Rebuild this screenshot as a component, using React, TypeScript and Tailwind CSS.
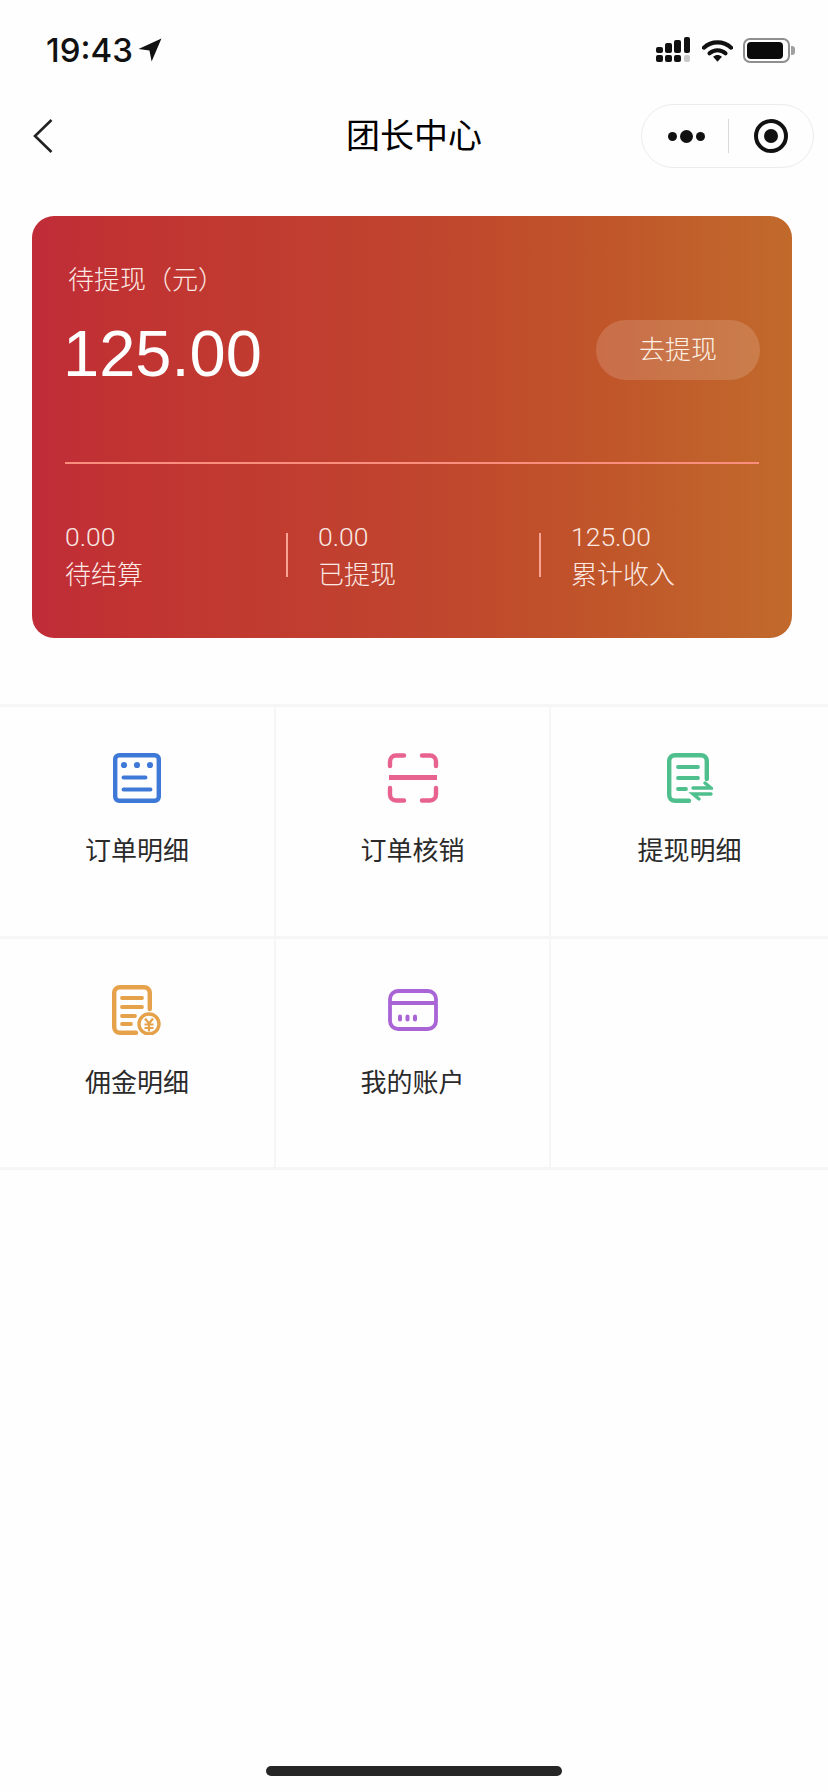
import React from 'react';

const font = { fontFamily: '"Liberation Sans", "Noto Sans CJK SC", sans-serif' };

function StatusIcons() {
  return (
    <div className="flex items-center">
      <svg width="36" height="26" viewBox="0 0 36 26" className="mr-[10px]">
        <g fill="#111">
          <rect x="0" y="10" width="7" height="6" rx="2" />
          <rect x="9" y="6" width="7" height="10" rx="2" />
          <rect x="18" y="3" width="7" height="13" rx="2" />
          <rect x="28" y="0" width="6" height="16" rx="2" />
          <rect x="0" y="18" width="7" height="7" rx="2" />
          <rect x="9" y="18" width="7" height="7" rx="2" />
          <rect x="18" y="18" width="7" height="7" rx="2" />
        </g>
        <rect x="28" y="18" width="6" height="7" rx="2" fill="#c9c9c9" />
      </svg>
      <svg width="31" height="25" viewBox="0 0 33 25" className="mr-[10px]">
        <path d="M2 9.500C10 2 23 2 31 9.500" fill="none" stroke="#111" strokeWidth="4.400" strokeLinecap="round" />
        <path d="M8 15.500C12.800 11.200 20.200 11.200 25 15.500" fill="none" stroke="#111" strokeWidth="4.400" strokeLinecap="round" />
        <path d="M11.800 19.200C14.800 16.700 18.200 16.700 21.200 19.200L16.500 24.500Z" fill="#111" />
      </svg>
      <div className="w-[47px] h-[25px] rounded-[7px] border-2 border-[#8f8f8f] p-[2px]">
        <div className="w-[36px] h-full rounded-[4px] bg-[#0a0a0a]" />
      </div>
      <div className="w-[4px] h-[9px] ml-[1px] rounded-r-[3px] bg-[#a0a0a0]" />
    </div>
  );
}

function OrderIcon() {
  return (
    <svg width="48" height="50" viewBox="0 0 48 50" fill="none" stroke="#3f79d8" strokeLinecap="round">
      <rect x="2.200" y="2.200" width="43.600" height="45.600" rx="4" strokeWidth="4.400" />
      <circle cx="11" cy="12" r="3.100" fill="#3f79d8" stroke="none" />
      <circle cx="24" cy="12" r="3.100" fill="#3f79d8" stroke="none" />
      <circle cx="37" cy="12" r="3.100" fill="#3f79d8" stroke="none" />
      <path d="M10.500 24.500H32.500" strokeWidth="3.800" />
      <path d="M10.500 36.500H37.500" strokeWidth="3.800" />
    </svg>
  );
}

function ScanIcon() {
  return (
    <svg width="52" height="50" viewBox="0 0 52 50" fill="none" stroke="#e8628f" strokeLinecap="round" strokeWidth="4.400">
      <path d="M17 2.500H9C5.500 2.500 3 5 3 8.500V13" />
      <path d="M35 2.500H43C46.500 2.500 49 5 49 8.500V13" />
      <path d="M3 35V41.500C3 45 5.500 47.500 9 47.500H17" />
      <path d="M49 35V41.500C49 45 46.500 47.500 43 47.500H35" />
      <path d="M2 24.500H50" strokeWidth="5.200" strokeLinecap="butt" />
    </svg>
  );
}

function WithdrawIcon() {
  return (
    <svg width="46" height="50" viewBox="0 0 46 50" fill="none" stroke="#4fc08d" strokeLinecap="round" strokeWidth="3.800">
      <path d="M22 47.800H8C4.500 47.800 2.200 45.500 2.200 42V8C2.200 4.500 4.500 2.200 8 2.200H34C37.500 2.200 39.800 4.500 39.800 8V26" strokeWidth="4.400" />
      <path d="M11 14H31" />
      <path d="M11 25H31" />
      <path d="M11 36H19" />
      <path d="M26 35H44L38 30" strokeWidth="3.400" />
      <path d="M44 41H26L32 46" strokeWidth="3.400" />
    </svg>
  );
}

function CommissionIcon() {
  return (
    <svg width="50" height="50" viewBox="0 0 50 50" fill="none" stroke="#e5a24a" strokeLinecap="round" strokeWidth="3.800">
      <path d="M24 47.800H8C4.500 47.800 2.200 45.500 2.200 42V8C2.200 4.500 4.500 2.200 8 2.200H32C35.500 2.200 37.800 4.500 37.800 8V24" strokeWidth="4.400" />
      <path d="M10 13H30" />
      <path d="M10 22H30" />
      <path d="M10 31H23" />
      <path d="M10 39H19" />
      <circle cx="37" cy="39" r="10" strokeWidth="3.400" />
      <path d="M33 33.500L37 38.500L41 33.500M32.500 39.500H41.500M32.500 43H41.500M37 38.500V46.500" strokeWidth="2.200" strokeLinecap="butt" />
    </svg>
  );
}

function AccountIcon() {
  return (
    <svg width="50" height="42" viewBox="0 0 50 42" fill="none" stroke="#a965d6" strokeWidth="3.800">
      <rect x="2" y="2" width="46" height="38" rx="8" />
      <path d="M2 14H48" />
      <rect x="10" y="25.500" width="4" height="7" rx="2" fill="#a965d6" stroke="none" />
      <rect x="17.500" y="25.500" width="4" height="7" rx="2" fill="#a965d6" stroke="none" />
      <rect x="25" y="25.500" width="4" height="7" rx="2" fill="#a965d6" stroke="none" />
    </svg>
  );
}

const menus = [
  { name: '订单明细', icon: <OrderIcon /> },
  { name: '订单核销', icon: <ScanIcon /> },
  { name: '提现明细', icon: <WithdrawIcon /> },
  { name: '佣金明细', icon: <CommissionIcon /> },
  { name: '我的账户', icon: <AccountIcon /> },
];

const stats = [
  { value: '0.00', label: '待结算' },
  { value: '0.00', label: '已提现' },
  { value: '125.00', label: '累计收入' },
];

export default function App() {
  return (
    <div className="w-[828px] h-[1792px] bg-[#fefefe] flex flex-col overflow-hidden" style={font}>
      {/* status bar */}
      <div className="h-[104px] pl-[46px] pr-[33px] pt-[37px] flex items-start justify-between">
        <div className="flex items-center h-[26px]">
          <span className="text-[33px] leading-[26px] font-medium text-[#111] [font-family:Inter,sans-serif]">19:43</span>
          <svg width="24" height="24" viewBox="0 0 22 22" className="ml-[5px]">
            <path d="M21.500 0.500L0.500 10L10.500 11.500L12.500 21.500Z" fill="#111" />
          </svg>
        </div>
        <StatusIcons />
      </div>

      {/* nav */}
      <div className="h-[64px] pl-[32px] pr-[14px] flex items-center">
        <svg width="21" height="36" viewBox="0 0 21 36" fill="none" stroke="#222" strokeWidth="2.600">
          <path d="M19.500 2L3 18L19.500 34" />
        </svg>
        <div className="flex-1 text-center text-[34px] leading-[64px] text-black pl-[134px]">团长中心</div>
        <div className="w-[173px] h-[64px] rounded-full border border-[#ececec] flex items-center">
          <div className="w-[86px] flex items-center justify-center gap-[3px] pl-[2px]">
            <span className="w-[9px] h-[9px] rounded-full bg-[#111]" />
            <span className="w-[13px] h-[13px] rounded-full bg-[#111]" />
            <span className="w-[9px] h-[9px] rounded-full bg-[#111]" />
          </div>
          <div className="w-px h-[34px] bg-[#d9d9d9]" />
          <div className="flex-1 flex items-center justify-center">
            <div className="w-[34px] h-[34px] rounded-full border-[4px] border-[#111] flex items-center justify-center">
              <div className="w-[14px] h-[14px] rounded-full bg-[#111]" />
            </div>
          </div>
        </div>
      </div>

      {/* earnings card */}
      <div className="mt-[48px] ml-[32px] mr-[36px] h-[422px] rounded-[22px] bg-[linear-gradient(90deg,#c02c38_0%,#c13332_12%,#c0442e_50%,#c0552a_75%,#c16a2c_100%)] px-[33px] flex flex-col text-white">
        <div className="mt-[49px] pl-[3px] text-[26px] leading-[30px] font-light text-[#fbe9e4]">待提现（元）</div>
        <div className="mt-[23px] h-[86px] flex items-start justify-between">
          <div className="-ml-[2px] text-[65px] leading-[72px]">125.00</div>
          <div className="w-[164px] h-[60px] -mr-[1px] mt-[2px] rounded-full bg-white/15 flex items-center justify-center text-[26px] text-[#fdf0e4] font-light">去提现</div>
        </div>
        <div className="mt-[58px] h-[2px] bg-[#f98e7e]" />
        <div className="mt-[59px] grid grid-cols-[253px_253px_1fr]">
          {stats.map((s, i) => (
            <div key={s.label} className="flex">
              <div className="w-[221px] h-[64px] -mt-[1px]">
                <div className="text-[26.500px] leading-[30px] font-light text-[#fbe9e4] [font-family:Roboto,sans-serif]">{s.value}</div>
                <div className="mt-[6px] text-[26px] leading-[34px] font-light text-[#fbe9e4]">{s.label}</div>
              </div>
              {i < 2 && <div className="w-[2px] h-[44px] mt-[10px] bg-[#f9a393]" />}
            </div>
          ))}
        </div>
      </div>

      {/* menu grid */}
      <div className="mt-[66px] grid grid-cols-[276px_275px_277px] border-t-[3px] border-[#f6f6f6]">
        {[0, 1, 2, 3, 4, 5].map((n) => {
          const m = menus[n];
          return (
            <div key={n} className="h-[231.500px] border-b-[3px] border-r-2 border-[#f6f6f6] [&:nth-child(3n)]:border-r-0 flex flex-col items-center">
              {m && (
                <>
                  <div className="h-[50px] mt-[46px] flex items-center justify-center">{m.icon}</div>
                  <div className="mt-[32px] text-[26px] leading-[32px] text-[#2a2a2a]">{m.name}</div>
                </>
              )}
            </div>
          );
        })}
      </div>

      {/* home indicator */}
      <div className="mt-auto mb-[16px] mx-auto w-[296px] h-[10px] rounded-full bg-[#262626]" />
    </div>
  );
}
